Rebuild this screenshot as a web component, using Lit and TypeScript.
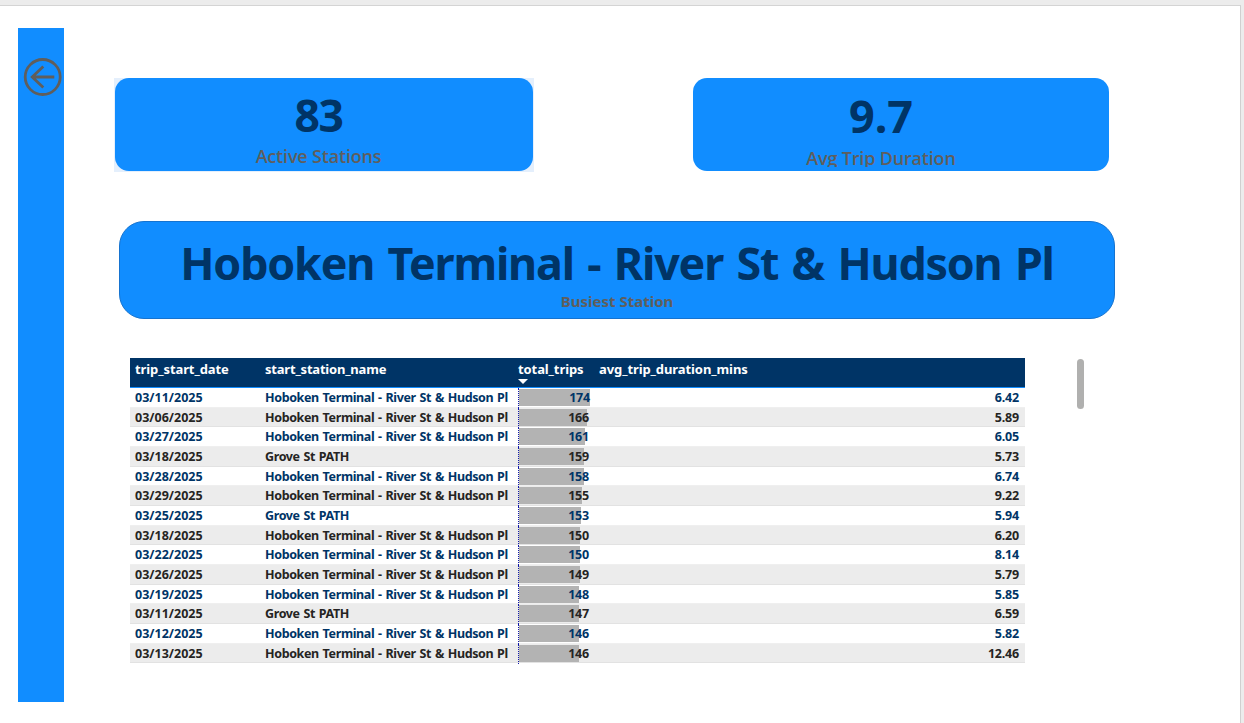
import { LitElement, html, css } from "lit";
import { customElement } from "lit/decorators.js";

type Trip = [date: string, station: string, trips: number, avg: string];

const HOBOKEN = "Hoboken Terminal - River St & Hudson Pl";
const GROVE = "Grove St PATH";
const MAX_TRIPS = 174;
const MAX_BAR = 71;

const TRIPS: Trip[] = [
  ["03/11/2025", HOBOKEN, 174, "6.42"],
  ["03/06/2025", HOBOKEN, 166, "5.89"],
  ["03/27/2025", HOBOKEN, 161, "6.05"],
  ["03/18/2025", GROVE, 159, "5.73"],
  ["03/28/2025", HOBOKEN, 158, "6.74"],
  ["03/29/2025", HOBOKEN, 155, "9.22"],
  ["03/25/2025", GROVE, 153, "5.94"],
  ["03/18/2025", HOBOKEN, 150, "6.20"],
  ["03/22/2025", HOBOKEN, 150, "8.14"],
  ["03/26/2025", HOBOKEN, 149, "5.79"],
  ["03/19/2025", HOBOKEN, 148, "5.85"],
  ["03/11/2025", GROVE, 147, "6.59"],
  ["03/12/2025", HOBOKEN, 146, "5.82"],
  ["03/13/2025", HOBOKEN, 146, "12.46"],
];

@customElement("trips-table")
class TripsTable extends LitElement {
  static styles = css`
    :host { display: block; width: 895px; font-weight: 700; white-space: nowrap; }
    .row { display: grid; grid-template-columns: 130px 253px 81px 431px; }
    .head {
      height: 29px;
      background: #003466;
      border-bottom: 1px solid #118dff;
      color: #fff;
      font-size: 13px;
      line-height: 22px;
      letter-spacing: -0.09px;
    }
    .head .cell { padding-left: 5px; }
    .head .station-head { letter-spacing: -0.2px; }
    .sort { display: block; margin-top: -1px; }
    .body {
      box-sizing: border-box;
      height: 19.67px;
      border-bottom: 1px solid #efefef;
      color: #003466;
      font-size: 12.5px;
      line-height: 19px;
    }
    .body:nth-child(odd) { background: #ececec; border-bottom-color: #e2e2e2; color: #252423; }
    .cell { padding-left: 5px; }
    .name { letter-spacing: -0.37px; word-spacing: 0.9px; }
    .trips { display: grid; border-left: 1px dotted #1017a8; margin-left: 5px; margin-bottom: -1px; width: 70px; letter-spacing: -0.2px; }
    .bar { grid-area: 1 / 1; height: 17px; margin-top: 1px; background: #b3b3b3; }
    .value { grid-area: 1 / 1; text-align: right; }
    .avg { text-align: right; padding-right: 6px; letter-spacing: -0.2px; }
  `;

  render() {
    return html`
      <div class="row head">
        <div class="cell">trip_start_date</div>
        <div class="cell station-head">start_station_name</div>
        <div class="cell">total_trips
          <svg class="sort" width="10" height="5" viewBox="0 0 10 5"><path d="M0 0H10L5 5Z" fill="#fff" /></svg>
        </div>
        <div class="cell">avg_trip_duration_mins</div>
      </div>
      ${TRIPS.map(([date, station, trips, avg]) => html`
        <div class="row body">
          <div class="cell">${date}</div>
          <div class="cell name">${station}</div>
          <div class="trips">
            <div class="bar" style="width:${((trips / MAX_TRIPS) * MAX_BAR).toFixed(1)}px"></div>
            <div class="value">${trips}</div>
          </div>
          <div class="avg">${avg}</div>
        </div>`)}
    `;
  }
}

@customElement("app-root")
class AppRoot extends LitElement {
  static styles = css`
    :host {
      display: block;
      box-sizing: border-box;
      width: 1244px;
      height: 723px;
      padding: 5px 3px 0 0;
      overflow: hidden;
      background: #ececec;
      font-family: "Noto Sans", "Open Sans", sans-serif;
    }
    .page {
      box-sizing: border-box;
      height: 718px;
      display: flex;
      background: #fff;
      border-top: 1px solid #d4d4d4;
      border-right: 1px solid #d0d0d0;
    }
    .rail {
      box-sizing: border-box;
      width: 46px;
      height: 674px;
      margin: 22px 0 0 18px;
      padding: 29px 0 0 5px;
      background: #118dff;
    }
    .back { display: block; }
    .main { display: flex; flex-direction: column; padding: 72px 0 0 50px; }
    .cards { display: flex; gap: 159.3px; height: 94px; }
    .frame { width: 420px; padding: 0 1px; box-sizing: border-box; background: #e4effc; }
    .card {
      box-sizing: border-box;
      height: 93.4px;
      border-radius: 14px;
      background: #118dff;
      text-align: center;
    }
    .stations { padding: 14px 11px 0 0; }
    .stations .figure { font-size: 44.5px; letter-spacing: -1.5px; }
    .stations .label { margin-top: 8px; }
    .duration { width: 415.4px; padding: 15px 40px 0 0; }
    .duration .label { height: 19px; overflow: hidden; }
    .figure { color: #003466; font-size: 45px; font-weight: 700; line-height: 46px; white-space: nowrap; }
    .label {
      margin-top: 9px;
      color: #605e5c;
      font: 600 18px/20px "Open Sans", sans-serif;
      letter-spacing: -0.18px;
    }
    .banner {
      box-sizing: border-box;
      width: 995.3px;
      height: 98px;
      margin: 49px 0 0 5.4px;
      padding-top: 18px;
      border: 1px solid #1673cf;
      border-radius: 25px;
      background: #118dff;
      text-align: center;
    }
    .title { font-size: 44.8px; letter-spacing: -1.2px; word-spacing: 3px; }
    .caption { margin-top: 6px; color: #605e5c; font-size: 15px; font-weight: 700; line-height: 18px; }
    .details { display: flex; gap: 52px; margin: 39px 0 0 16px; }
    .thumb { width: 7px; height: 50px; margin-top: 1px; border-radius: 3.5px; background: #b0b0af; }
  `;

  render() {
    return html`
      <div class="page">
        <nav class="rail">
          <svg class="back" width="40" height="40" viewBox="0 0 40 40" fill="none" stroke="#605e5c" stroke-width="2.8">
            <circle cx="19.7" cy="20" r="17.5" />
            <path d="M31.3 20H9.5M20.3 9.6L9.2 20L20.3 30.4" />
          </svg>
        </nav>
        <main class="main">
          <section class="cards">
            <div class="frame">
              <div class="card stations">
                <div class="figure">83</div>
                <div class="label">Active Stations</div>
              </div>
            </div>
            <div class="card duration">
              <div class="figure">9.7</div>
              <div class="label">Avg Trip Duration</div>
            </div>
          </section>
          <section class="banner">
            <div class="figure title">${HOBOKEN}</div>
            <div class="caption">Busiest Station</div>
          </section>
          <section class="details">
            <trips-table></trips-table>
            <div class="thumb"></div>
          </section>
        </main>
      </div>
    `;
  }
}
